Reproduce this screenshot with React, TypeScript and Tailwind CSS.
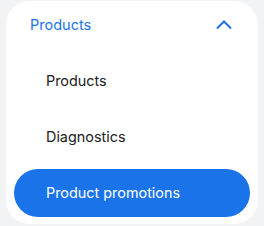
import React from "react";

export default function App() {
  const items = ["Products", "Diagnostics", "Product promotions"];
  const active = 2;
  return (
    <div
      className="w-[264px] h-[226px] bg-[#f1f3f4] pl-[6px] pt-[1px]"
      style={{ fontFamily: "Inter, 'Noto Sans', sans-serif" }}
    >
      <div className="w-[252px] h-[223px] bg-white rounded-[24px] px-[8px] pb-[7px] flex flex-col gap-2">
        <div className="h-[48px] flex items-center justify-between pl-[16px] pr-[14px]">
          <span className="text-[14.5px] leading-[20px] font-normal text-[#1a73e8]">Products</span>
          <svg width="24" height="24" viewBox="0 0 24 24" className="text-[#1a73e8]">
            <path d="M5 15.5 L12 8.5 L19 15.5" fill="none" stroke="currentColor" strokeWidth="2" />
          </svg>
        </div>
        {items.map((t, i) => (
          <div
            key={t}
            className={
              i === active
                ? "h-[48px] flex items-center pl-[32px] rounded-full bg-[#1a73e8] text-white"
                : "h-[48px] flex items-center pl-[32px] rounded-full text-[#202124]"
            }
          >
            <span className="text-[14.4px] leading-[20px] font-normal">{t}</span>
          </div>
        ))}
      </div>
    </div>
  );
}
